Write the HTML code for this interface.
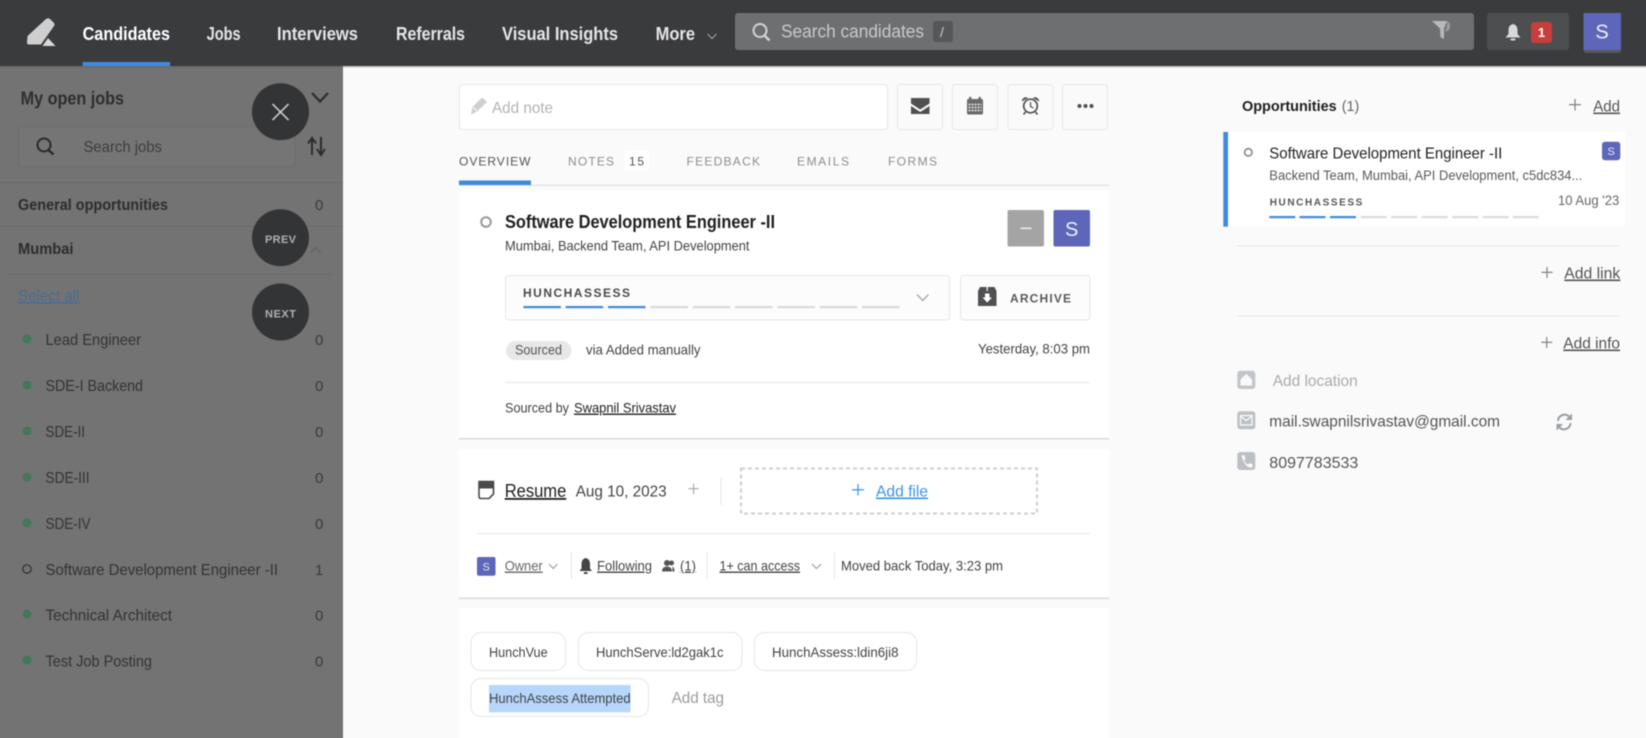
<!DOCTYPE html>
<html lang="en">
<head>
<meta charset="utf-8">
<title>Candidates</title>
<style>
html,body{margin:0;padding:0;width:1646px;height:738px;overflow:hidden;background:#fafafa}
body{position:relative}
svg{display:block;position:absolute;left:-10px;top:-10px;filter:blur(.5px)}
text{font-family:"Liberation Sans",sans-serif;white-space:pre}
.b{font-weight:700}
.u{text-decoration:underline}
.nav{font-size:18px;font-weight:700;fill:#e6e6e6}
.side{font-size:16px;fill:#333}
.cnt{font-size:15px;fill:#3a3a3a}
.body{font-size:14px;fill:#444}
.tab{font-size:12px;fill:#8d8d8d}
.cap{font-size:11px;font-weight:700;fill:#d0d0d0}
</style>
</head>
<body>
<svg width="1666" height="758" viewBox="-10 -10 1666 758" xmlns="http://www.w3.org/2000/svg">
<rect x="-10" y="-10" width="1666" height="758" fill="#fafafa"/>

<!-- top navigation -->
<rect x="-10" y="-10" width="1666" height="76" fill="#3a3b3d"/>
<rect x="-10" y="66" width="1666" height="1.5" fill="#c9c9c9"/>
<path d="M27.500 36 L46 19 Q48 17.500 50 19 L54 23 Q55 24.500 54 26 L41 44.500 L29 44.500 Q27 44.500 27 42.500Z" fill="#cfcfcf"/>
<path d="M48 38 L55.500 46 L42.500 46Z" fill="#d8d8d8"/>
<text x="82.600" y="40" class="nav" style="fill:#fff" textLength="87.400" lengthAdjust="spacingAndGlyphs">Candidates</text>
<rect x="82.600" y="62" width="87.400" height="4" fill="#3f8ae0"/>
<text x="206.600" y="40" class="nav" textLength="34" lengthAdjust="spacingAndGlyphs">Jobs</text>
<text x="277" y="40" class="nav" textLength="81" lengthAdjust="spacingAndGlyphs">Interviews</text>
<text x="396" y="40" class="nav" textLength="69" lengthAdjust="spacingAndGlyphs">Referrals</text>
<text x="502" y="40" class="nav" textLength="116" lengthAdjust="spacingAndGlyphs">Visual Insights</text>
<text x="655.600" y="40" class="nav" textLength="39.400" lengthAdjust="spacingAndGlyphs">More</text>
<path d="M707.500 34 L712 38.500 L716.500 34" fill="none" stroke="#9a9a9a" stroke-width="1.200"/>

<rect x="735" y="13" width="739" height="37" rx="3" fill="#6e6f71"/>
<circle cx="760" cy="30.500" r="6.500" fill="none" stroke="#d4d4d4" stroke-width="2"/>
<path d="M764.500 35.500 L769.500 40.500" stroke="#d4d4d4" stroke-width="2.400"/>
<text x="781" y="37.500" font-size="18" fill="#c9c9c9" textLength="143" lengthAdjust="spacingAndGlyphs">Search candidates</text>
<rect x="933" y="21" width="20" height="21" rx="3" fill="#565759"/>
<text x="940" y="37" font-size="14" fill="#d0d0d0">/</text>
<path d="M1432 21 H1447 L1444 28.500 L1444 39 L1440.500 37 L1440 28.500Z" fill="#b9b9b9"/>
<path d="M1447 21 Q1452 24 1449 30 L1445 32 L1447 25Z" fill="#9b9b9b"/>

<rect x="1487" y="13" width="82" height="37" rx="3" fill="#4d4e50"/>
<path d="M1513 24 Q1517.500 25 1517.500 30 L1517.500 34 L1520.500 37.500 L1505.500 37.500 L1508.500 34 L1508.500 30 Q1508.500 25 1513 24Z" fill="#d9d9d9"/>
<rect x="1510.500" y="38.500" width="5" height="2" rx="1" fill="#d9d9d9"/>
<rect x="1531" y="22" width="21" height="21" rx="3" fill="#c73e3c"/>
<text x="1541.500" y="37" font-size="13" class="b" fill="#fff" text-anchor="middle">1</text>
<rect x="1583.500" y="15" width="37.500" height="38" rx="3" fill="#58595b"/>
<rect x="1583.500" y="13" width="37.500" height="37" fill="#5d66b8"/>
<text x="1602" y="38.500" font-size="20" fill="#f0f0f8" text-anchor="middle">S</text>

<!-- sidebar -->
<rect x="-10" y="66" width="353" height="682" fill="#737373"/>
<rect x="-10" y="66" width="353" height="1.500" fill="#6a6a6a"/>
<text x="20.600" y="104.500" font-size="18" class="b" fill="#2e2e2e" textLength="103.400" lengthAdjust="spacingAndGlyphs">My open jobs</text>
<path d="M312 93 L320 101.500 L328 93" fill="none" stroke="#2c2c2c" stroke-width="2.200"/>
<rect x="18.500" y="126.500" width="277" height="40" rx="3" fill="#757575" stroke="#6c6c6c"/>
<circle cx="44" cy="145" r="6.500" fill="none" stroke="#2a2a2a" stroke-width="2"/>
<path d="M48.500 150 L53.500 154.500" stroke="#2a2a2a" stroke-width="2.400"/>
<text x="83.500" y="152" class="side" style="fill:#3e3e3e" textLength="78.500" lengthAdjust="spacingAndGlyphs">Search jobs</text>
<path d="M312 155 V139 M308 143.500 L312 138 L316 143.500 M321 137 V153 M317 149 L321 155 L325 149" fill="none" stroke="#2c2c2c" stroke-width="2"/>
<rect x="-10" y="182" width="353" height="1" fill="#6a6a6a"/>
<text x="18" y="210" font-size="16" class="b" fill="#2d2d2d" textLength="150" lengthAdjust="spacingAndGlyphs">General opportunities</text>
<text x="315" y="210" class="cnt" textLength="9">0</text>
<rect x="-10" y="226" width="353" height="1" fill="#6a6a6a"/>
<text x="18" y="254" font-size="16" class="b" fill="#2d2d2d" textLength="55.500" lengthAdjust="spacingAndGlyphs">Mumbai</text>
<path d="M310.500 253 L315.500 247.500 L320.500 253" fill="none" stroke="#636363" stroke-width="1.300"/>
<rect x="9" y="274" width="324" height="1" fill="#6a6a6a"/>
<text x="18" y="301" font-size="16" class="u" fill="#4a6b92" textLength="61.500" lengthAdjust="spacingAndGlyphs">Select all</text>

<circle cx="27" cy="339" r="4.500" fill="#44775a"/>
<text x="45.500" y="345" class="side" textLength="95.500" lengthAdjust="spacingAndGlyphs">Lead Engineer</text>
<text x="315" y="345" class="cnt" textLength="9">0</text>
<circle cx="27" cy="385" r="4.500" fill="#44775a"/>
<text x="45.500" y="391" class="side" textLength="97.500" lengthAdjust="spacingAndGlyphs">SDE-I Backend</text>
<text x="315" y="391" class="cnt" textLength="9">0</text>
<circle cx="27" cy="431" r="4.500" fill="#44775a"/>
<text x="45.500" y="437" class="side" textLength="39.500" lengthAdjust="spacingAndGlyphs">SDE-II</text>
<text x="315" y="437" class="cnt" textLength="9">0</text>
<circle cx="27" cy="477" r="4.500" fill="#44775a"/>
<text x="45.500" y="483" class="side" textLength="44" lengthAdjust="spacingAndGlyphs">SDE-III</text>
<text x="315" y="483" class="cnt" textLength="9">0</text>
<circle cx="27" cy="523" r="4.500" fill="#44775a"/>
<text x="45.500" y="529" class="side" textLength="45" lengthAdjust="spacingAndGlyphs">SDE-IV</text>
<text x="315" y="529" class="cnt" textLength="9">0</text>
<circle cx="27" cy="569" r="4.200" fill="none" stroke="#383838" stroke-width="1.400"/>
<text x="45.500" y="575" class="side" textLength="232.500" lengthAdjust="spacingAndGlyphs">Software Development Engineer -II</text>
<text x="315" y="575" class="cnt">1</text>
<circle cx="27" cy="614" r="4.500" fill="#44775a"/>
<text x="45.500" y="620.500" class="side" textLength="126.500" lengthAdjust="spacingAndGlyphs">Technical Architect</text>
<text x="315" y="620.500" class="cnt" textLength="9">0</text>
<circle cx="27" cy="660" r="4.500" fill="#44775a"/>
<text x="45.500" y="666.500" class="side" textLength="106.500" lengthAdjust="spacingAndGlyphs">Test Job Posting</text>
<text x="315" y="666.500" class="cnt" textLength="9">0</text>

<circle cx="280.500" cy="111.700" r="28.500" fill="#333436"/>
<path d="M272.500 104 L288.500 120 M288.500 104 L272.500 120" stroke="#d8d8d8" stroke-width="1.500"/>
<circle cx="280.500" cy="237.700" r="28.500" fill="#333436"/>
<text x="265" y="243" class="cap" style="fill:#b0b0b0" textLength="31">PREV</text>
<circle cx="280.500" cy="312" r="28.500" fill="#333436"/>
<text x="265" y="317.500" class="cap" style="fill:#b0b0b0" textLength="31">NEXT</text>

<!-- note row -->
<rect x="459.500" y="84.500" width="428" height="45" rx="3" fill="#fff" stroke="#e6e6e6"/>
<path d="M471 114.500 L472.500 107 L482 97.500 L487 102 L477 111.500Z" fill="#cfcfcf"/>
<path d="M473.500 107.500 L476.500 110.500" stroke="#fff" stroke-width="1"/>
<text x="492" y="113" font-size="16" fill="#b3b3b3" textLength="61" lengthAdjust="spacingAndGlyphs">Add note</text>

<rect x="897.500" y="84.500" width="45" height="45" rx="3" fill="#fafafa" stroke="#e8e8e8"/>
<rect x="952.500" y="84.500" width="45" height="45" rx="3" fill="#fafafa" stroke="#e8e8e8"/>
<rect x="1008" y="84.500" width="45" height="45" rx="3" fill="#fafafa" stroke="#e8e8e8"/>
<rect x="1062.500" y="84.500" width="45" height="45" rx="3" fill="#fafafa" stroke="#e8e8e8"/>
<path d="M911 98 H929.500 V103.500 L920.200 109.500 L911 103.500Z M911 106 L920.200 112 L929.500 106 V114 H911Z" fill="#505052"/>
<rect x="967" y="99" width="16" height="15.500" rx="1.500" fill="#6a6a6c"/>
<rect x="969" y="97" width="2.500" height="4" fill="#6a6a6c"/><rect x="978.500" y="97" width="2.500" height="4" fill="#6a6a6c"/>
<path d="M968.500 104.500 H981.500 M968.500 107.500 H981.500 M968.500 110.500 H981.500" stroke="#e8e8e8" stroke-width="1.400" stroke-dasharray="2 1"/>
<circle cx="1030.500" cy="106" r="6.800" fill="none" stroke="#505052" stroke-width="1.700"/>
<path d="M1030.500 102 V106.500 L1033.500 108" fill="none" stroke="#505052" stroke-width="1.200"/>
<path d="M1022.500 100.500 Q1023.500 97 1027 98 Z M1038.500 100.500 Q1037.500 97 1034 98Z" fill="#505052" stroke="#505052" stroke-width="1"/>
<path d="M1025.500 112 L1023.500 114.500 M1035.500 112 L1037.500 114.500" stroke="#505052" stroke-width="1.600"/>
<circle cx="1079.500" cy="106" r="2" fill="#505052"/><circle cx="1085.500" cy="106" r="2" fill="#505052"/><circle cx="1091.500" cy="106" r="2" fill="#505052"/>

<!-- tabs -->
<text x="459" y="165.500" class="tab" style="fill:#555" textLength="71.500">OVERVIEW</text>
<text x="568" y="165.500" class="tab" textLength="46">NOTES</text>
<rect x="624" y="150.500" width="25" height="20.500" rx="2" fill="#fff"/>
<text x="629" y="165.500" class="tab" style="fill:#555" textLength="15">15</text>
<text x="686.500" y="165.500" class="tab" textLength="73.500">FEEDBACK</text>
<text x="797" y="165.500" class="tab" textLength="52">EMAILS</text>
<text x="888" y="165.500" class="tab" textLength="49">FORMS</text>
<rect x="459" y="184.500" width="650" height="1.500" fill="#e4e4e4"/>
<rect x="459" y="180.500" width="72" height="4.500" fill="#3f8ae0"/>

<!-- card one -->
<rect x="459" y="190" width="650" height="248" fill="#fff"/>
<rect x="459" y="438" width="650" height="1.500" fill="#d9d9d9"/>
<circle cx="486" cy="222" r="4.800" fill="none" stroke="#9a9a9a" stroke-width="2"/>
<text x="505" y="228" font-size="18" class="b" fill="#1f1f1f" textLength="270" lengthAdjust="spacingAndGlyphs">Software Development Engineer -II</text>
<text x="505" y="250.500" class="body" textLength="244.500" lengthAdjust="spacingAndGlyphs">Mumbai, Backend Team, API Development</text>
<rect x="1007.500" y="210" width="36.500" height="36.500" rx="2" fill="#a4a4a4"/>
<rect x="1020.500" y="227.500" width="11" height="1.600" fill="#e8e8e8"/>
<rect x="1053.500" y="210" width="36.500" height="36.500" rx="2" fill="#5d66b8"/>
<text x="1071.700" y="236" font-size="20" fill="#f0f0f8" text-anchor="middle">S</text>

<rect x="505.500" y="275.500" width="444" height="44.500" rx="3" fill="#fcfcfc" stroke="#e5e5e5"/>
<text x="523" y="297" font-size="12" font-weight="700" fill="#4a4a4a" textLength="107">HUNCHASSESS</text>
<g fill="#d9d9d9">
<rect x="650.500" y="306" width="37.500" height="2.200"/><rect x="692.800" y="306" width="37.500" height="2.200"/><rect x="735.100" y="306" width="37.500" height="2.200"/><rect x="777.400" y="306" width="37.500" height="2.200"/><rect x="819.700" y="306" width="37.500" height="2.200"/><rect x="862" y="306" width="37.500" height="2.200"/>
</g>
<g fill="#3f8ae0">
<rect x="523.400" y="306" width="37.500" height="2.200"/><rect x="565.700" y="306" width="37.500" height="2.200"/><rect x="608" y="306" width="37.500" height="2.200"/>
</g>
<path d="M917 294.500 L922.700 300.500 L928.500 294.500" fill="none" stroke="#999" stroke-width="1.200"/>

<rect x="960.500" y="275.500" width="129.500" height="44.500" rx="3" fill="#fcfcfc" stroke="#e5e5e5"/>
<path d="M978 291 L980 287 H994.500 L996.500 291 V306 H978Z" fill="#505052"/>
<path d="M987.200 287 V291" stroke="#fff" stroke-width="1.200"/>
<path d="M985 293.500 H989.500 V297.500 H992 L987.200 302.500 L982.500 297.500 H985Z" fill="#fff"/>
<text x="1010" y="302.500" font-size="12" font-weight="700" fill="#5a5a5a" textLength="61">ARCHIVE</text>

<rect x="506" y="341" width="65.500" height="19" rx="9.500" fill="#e8e8e8"/>
<text x="515" y="354.500" class="body" style="fill:#555" textLength="47" lengthAdjust="spacingAndGlyphs">Sourced</text>
<text x="586" y="354.500" class="body" textLength="114.500" lengthAdjust="spacingAndGlyphs">via Added manually</text>
<text x="978" y="353.500" class="body" textLength="112" lengthAdjust="spacingAndGlyphs">Yesterday, 8:03 pm</text>
<rect x="505" y="382" width="585" height="1" fill="#e6e6e6"/>
<text x="505" y="412.500" class="body" textLength="64" lengthAdjust="spacingAndGlyphs">Sourced by</text>
<text x="574" y="412.500" class="body u" style="fill:#222" textLength="102" lengthAdjust="spacingAndGlyphs">Swapnil Srivastav</text>

<!-- card two -->
<rect x="459" y="449" width="650" height="149" fill="#fff"/>
<rect x="459" y="597.500" width="650" height="1.500" fill="#d9d9d9"/>
<path d="M479 481.500 H493.500 V494 L489 498.500 H481 Q479 498.500 479 496.500Z" fill="none" stroke="#4a4a4a" stroke-width="1.600"/>
<rect x="479" y="481.500" width="14.500" height="7" fill="#4a4a4a"/>
<text x="504.700" y="497" font-size="18" class="u" fill="#1f1f1f" textLength="61.600" lengthAdjust="spacingAndGlyphs">Resume</text>
<text x="575.700" y="496.500" font-size="16" fill="#444" textLength="91" lengthAdjust="spacingAndGlyphs">Aug 10, 2023</text>
<path d="M693.600 483.500 V494 M688.500 488.700 H698.700" stroke="#a5a5a5" stroke-width="1.100"/>
<rect x="720.500" y="477" width="1" height="28" fill="#e8e8e8"/>
<rect x="741" y="468.500" width="296" height="45" fill="none" stroke="#cfcfcf" stroke-width="2" stroke-dasharray="4 3"/>
<path d="M858 484 V495.500 M852 489.800 H864" stroke="#4a98ea" stroke-width="1.300"/>
<text x="876" y="496.500" font-size="16" class="u" fill="#3c93ea" textLength="52" lengthAdjust="spacingAndGlyphs">Add file</text>
<rect x="477" y="533" width="613" height="1" fill="#e6e6e6"/>

<rect x="477" y="557" width="18.500" height="18.700" rx="2" fill="#5d66b8"/>
<text x="486.200" y="570.500" font-size="11" fill="#e8e8f4" text-anchor="middle">S</text>
<text x="504.700" y="570.500" class="body u" style="fill:#666" textLength="38" lengthAdjust="spacingAndGlyphs">Owner</text>
<path d="M549 564 L553.200 568.500 L557.400 564" fill="none" stroke="#999" stroke-width="1.100"/>
<rect x="571" y="552" width="1" height="27" fill="#e4e4e4"/>
<path d="M585.700 558 Q590 559 590 564 L590 568.500 L592 571 H579.500 L581.500 568.500 V564 Q581.500 559 585.700 558Z" fill="#444"/>
<rect x="583.700" y="572" width="4" height="2" rx="1" fill="#444"/>
<text x="597" y="570.500" class="body u" textLength="55" lengthAdjust="spacingAndGlyphs">Following</text>
<circle cx="667" cy="563" r="3" fill="#555"/><circle cx="671.500" cy="563" r="2.500" fill="#555"/>
<path d="M662 571.500 Q662 566.500 667 566.500 Q672 566.500 672 571.500Z M672.500 571.500 V566.500 Q674.500 567.500 674.500 571.500Z" fill="#555"/>
<text x="680" y="570.500" class="body u" textLength="16" lengthAdjust="spacingAndGlyphs">(1)</text>
<rect x="706.500" y="552" width="1" height="27" fill="#e4e4e4"/>
<text x="719.500" y="570.500" class="body u" textLength="80.500" lengthAdjust="spacingAndGlyphs">1+ can access</text>
<path d="M812 564 L816.500 568.500 L821 564" fill="none" stroke="#999" stroke-width="1.100"/>
<rect x="834" y="552" width="1" height="27" fill="#e4e4e4"/>
<text x="841" y="570.500" class="body" textLength="162" lengthAdjust="spacingAndGlyphs">Moved back Today, 3:23 pm</text>

<!-- card three -->
<rect x="459" y="608" width="650" height="140" fill="#fff"/>
<rect x="470.900" y="632.500" width="94.500" height="38" rx="10" fill="#fff" stroke="#e6e6e6"/>
<rect x="578.500" y="632.500" width="163.500" height="38" rx="10" fill="#fff" stroke="#e6e6e6"/>
<rect x="754.500" y="632.500" width="162" height="38" rx="10" fill="#fff" stroke="#e6e6e6"/>
<text x="489" y="657" class="body" textLength="58.600" lengthAdjust="spacingAndGlyphs">HunchVue</text>
<text x="596" y="657" class="body" textLength="127.500" lengthAdjust="spacingAndGlyphs">HunchServe:ld2gak1c</text>
<text x="772" y="657" class="body" textLength="126.500" lengthAdjust="spacingAndGlyphs">HunchAssess:ldin6ji8</text>
<rect x="470.900" y="678.500" width="177.600" height="38" rx="10" fill="#fff" stroke="#e6e6e6"/>
<rect x="489" y="685" width="141.600" height="27.300" fill="#b7d6fb"/>
<text x="489" y="703" class="body" textLength="141.600" lengthAdjust="spacingAndGlyphs">HunchAssess Attempted</text>
<text x="671.700" y="703" font-size="16" fill="#9c9c9c" textLength="52.300" lengthAdjust="spacingAndGlyphs">Add tag</text>

<!-- right panel -->
<text x="1242" y="111" font-size="15" class="b" fill="#1f1f1f" textLength="94.700" lengthAdjust="spacingAndGlyphs">Opportunities</text>
<text x="1341.700" y="111" font-size="15" fill="#666" textLength="17.600" lengthAdjust="spacingAndGlyphs">(1)</text>
<path d="M1575 99 V110.500 M1569 104.700 H1581" stroke="#777" stroke-width="1.100"/>
<text x="1593.300" y="111.500" font-size="16" class="u" fill="#555" textLength="26.700" lengthAdjust="spacingAndGlyphs">Add</text>

<rect x="1228" y="132" width="397" height="94.700" fill="#fff"/>
<rect x="1223.300" y="132" width="4.700" height="94.700" fill="#3f8ae0"/>
<circle cx="1248.300" cy="152.300" r="3.700" fill="none" stroke="#8a8a8a" stroke-width="1.700"/>
<text x="1269.300" y="158.500" font-size="16" fill="#222" textLength="233" lengthAdjust="spacingAndGlyphs">Software Development Engineer -II</text>
<text x="1269.300" y="180" class="body" style="fill:#5a5a5a" textLength="313" lengthAdjust="spacingAndGlyphs">Backend Team, Mumbai, API Development, c5dc834...</text>
<rect x="1602" y="141.700" width="18.300" height="18.600" rx="3" fill="#5d66b8"/>
<text x="1611.200" y="155" font-size="11" fill="#e8e8f4" text-anchor="middle">S</text>
<text x="1269.700" y="205.500" font-size="10" font-weight="700" fill="#555" textLength="92.600">HUNCHASSESS</text>
<text x="1558" y="205" class="body" style="fill:#666" textLength="61.300" lengthAdjust="spacingAndGlyphs">10 Aug '23</text>
<g fill="#dadada">
<rect x="1360.700" y="216" width="26" height="2.200"/><rect x="1391.200" y="216" width="26" height="2.200"/><rect x="1421.700" y="216" width="26" height="2.200"/><rect x="1452.200" y="216" width="26" height="2.200"/><rect x="1482.700" y="216" width="26" height="2.200"/><rect x="1512.700" y="216" width="26" height="2.200"/>
</g>
<g fill="#3f8ae0">
<rect x="1269.300" y="216" width="26" height="2.200"/><rect x="1299.500" y="216" width="26" height="2.200"/><rect x="1330" y="216" width="26" height="2.200"/>
</g>

<rect x="1237.300" y="245.500" width="383" height="1" fill="#e9e9e9"/>
<path d="M1547 267 V278 M1541.500 272.300 H1552.500" stroke="#777" stroke-width="1.100"/>
<text x="1564.300" y="278.500" font-size="16" class="u" fill="#555" textLength="56" lengthAdjust="spacingAndGlyphs">Add link</text>
<rect x="1237.300" y="315.500" width="383" height="1" fill="#e9e9e9"/>
<path d="M1546.700 337 V348 M1541.200 342.300 H1552.200" stroke="#777" stroke-width="1.100"/>
<text x="1563.300" y="348.500" font-size="16" class="u" fill="#555" textLength="56.700" lengthAdjust="spacingAndGlyphs">Add info</text>

<rect x="1237.300" y="370.700" width="18" height="18.300" rx="3" fill="#c2c6ca"/>
<path d="M1246.300 374 L1252 379.500 V385.500 H1240.500 V379.500Z" fill="#fafafa"/>
<text x="1272.700" y="386" font-size="16" fill="#aaa" textLength="85" lengthAdjust="spacingAndGlyphs">Add location</text>
<rect x="1237.300" y="411.300" width="18" height="18" rx="3" fill="#bcc0c4"/>
<rect x="1240.500" y="415.500" width="11.500" height="9.500" fill="none" stroke="#fafafa" stroke-width="1.300"/>
<path d="M1240.500 416 L1246.300 420.500 L1252 416" fill="none" stroke="#fafafa" stroke-width="1.300"/>
<text x="1269.300" y="426.500" font-size="16" fill="#555" textLength="230.700" lengthAdjust="spacingAndGlyphs">mail.swapnilsrivastav@gmail.com</text>
<path d="M1558 421 A6.500 6.500 0 0 1 1569 416.500 M1570.500 423 A6.500 6.500 0 0 1 1559.500 427.500" fill="none" stroke="#9a9ea2" stroke-width="2"/>
<path d="M1572 413.500 V420 H1565.500Z M1556.500 430.500 V424 H1563Z" fill="#9a9ea2"/>
<rect x="1237.300" y="452" width="18" height="18" rx="3" fill="#bcc0c4"/>
<path d="M1241.500 455.500 L1244.500 455 L1245.500 459 L1244 460.500 Q1245.500 463.500 1248 464.500 L1249.500 463 L1253 464.500 L1252 467.500 Q1245 468.500 1241.500 455.500Z" fill="#fafafa"/>
<text x="1269.300" y="468" font-size="16" fill="#555" textLength="89" lengthAdjust="spacingAndGlyphs">8097783533</text>
</svg>
</body>
</html>
